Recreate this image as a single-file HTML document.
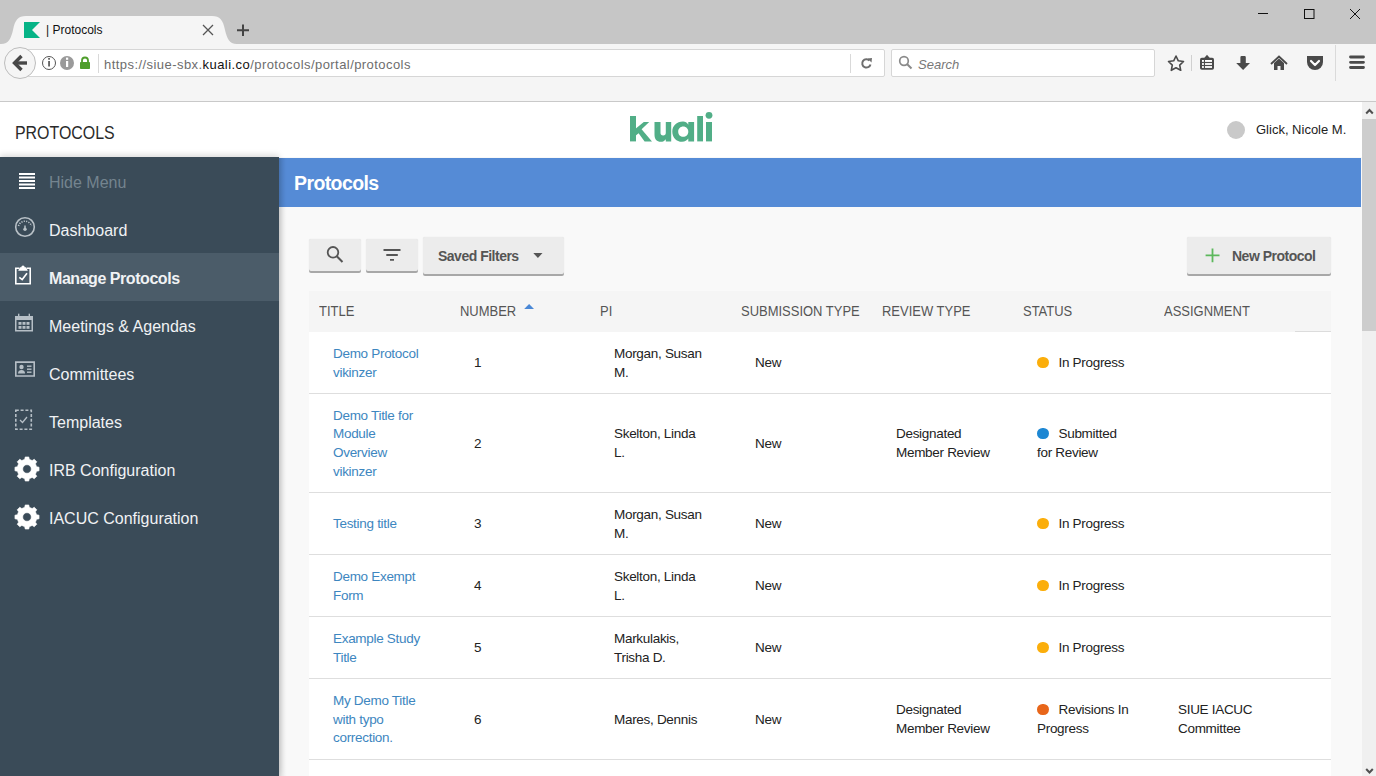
<!DOCTYPE html>
<html><head><meta charset="utf-8">
<style>
*{margin:0;padding:0;box-sizing:border-box}
html,body{width:1376px;height:776px;overflow:hidden;background:#fff;font-family:"Liberation Sans",sans-serif}
.abs{position:absolute}
#titlebar{left:0;top:0;width:1376px;height:44px;background:#c6c6c6}
#toolbar{left:0;top:44px;width:1376px;height:57px;background:#f5f5f5}
#tbline{left:0;top:101px;width:1376px;height:1px;background:#c9c9c9}
#page{left:0;top:102px;width:1362px;height:674px;background:#fff;overflow:hidden}
#sb{left:1362px;top:102px;width:14px;height:674px;background:#f0f0f0}
.ico{fill:#4a4a4a}
.nav{position:absolute;left:0;width:279px;height:48px;color:#f0f2f4;font-size:16px;line-height:48px}
.nav span{position:absolute;left:49px;top:1.5px;white-space:nowrap}
.nav svg{position:absolute}
.th{position:absolute;top:189px;height:41px;line-height:41px;font-size:14.5px;color:#555;white-space:nowrap;transform:scaleX(0.895);transform-origin:0 0}
.row{position:absolute;left:309px;width:1022px;background:#fff;border-bottom:1px solid #dedede}
.c{position:absolute;top:1px;bottom:-1px;display:flex;align-items:center;font-size:13.5px;line-height:18.6px;color:#222;white-space:nowrap;letter-spacing:-0.3px}
.c>span{display:block}
.bt{font-size:14px;font-weight:bold;color:#555;white-space:nowrap;letter-spacing:-0.5px;margin-top:-1px}
.t{color:#3d86c0}
.dot{display:inline-block;width:11.5px;height:11.5px;border-radius:50%;vertical-align:-1px;margin-right:10px}
.btn{position:absolute;background:#ececec;border-radius:2px;box-shadow:0 2px 0 #a8a8a8, 0 0 1px rgba(0,0,0,.15)}
</style></head><body>
<!-- browser chrome -->
<div id="titlebar" class="abs"></div>
<svg class="abs" style="left:0;top:0" width="1376" height="44">
  <path d="M1 44 C9 44 11 38 13 30 C15 20 18 16 26 16 L212 16 C220 16 223 20 225 30 C227 38 229 44 237 44 Z" fill="#f5f5f5"/>
  <!-- favicon -->
  <path d="M24 22 L40 22 L32 30 L40 38 L24 38 Z" fill="#06b386"/>
  <!-- close x -->
  <path d="M203 25 L213 35 M213 25 L203 35" stroke="#555" stroke-width="1.3"/>
  <!-- plus -->
  <path d="M243 24.5 V36 M237 30.25 H249" stroke="#444" stroke-width="2"/>
  <!-- window controls -->
  <path d="M1258 13.5 H1268" stroke="#111" stroke-width="1"/>
  <rect x="1304.5" y="9.5" width="9.5" height="9" fill="none" stroke="#111" stroke-width="1"/>
  <path d="M1350 9 L1360 19 M1360 9 L1350 19" stroke="#111" stroke-width="1"/>
</svg>
<div class="abs" style="left:46px;top:23px;font-size:12px;color:#111;white-space:nowrap">| Protocols</div>
<div id="toolbar" class="abs"></div>
<div id="tbline" class="abs"></div>
<!-- url bar -->
<div class="abs" style="left:20px;top:49px;width:865px;height:28px;background:#fff;border:1px solid #d6d6d6;border-radius:2px"></div>
<div class="abs" style="left:891px;top:49px;width:264px;height:28px;background:#fff;border:1px solid #d6d6d6;border-radius:2px"></div>
<svg class="abs" style="left:0;top:43px" width="1376" height="58">
  <circle cx="20" cy="20" r="15.5" fill="#f5f5f5" stroke="#bdbdbd" stroke-width="1"/>
  <path d="M27 20 H16" stroke="#484848" stroke-width="3.4"/>
  <path d="M21.5 13 L14.5 20 L21.5 27" fill="none" stroke="#484848" stroke-width="3.4" stroke-linejoin="miter"/>
  <circle cx="49" cy="20" r="6.5" fill="none" stroke="#555" stroke-width="1"/>
  <rect x="48.2" y="18" width="1.7" height="5.5" fill="#555"/><rect x="48.2" y="15" width="1.7" height="1.7" fill="#555"/>
  <circle cx="67" cy="20" r="7" fill="#9a9a9a"/>
  <rect x="66" y="18" width="2.2" height="6" fill="#fff"/><rect x="66" y="14.6" width="2.2" height="2.2" fill="#fff"/>
  <path d="M82 19 V17.5 A3 3 0 0 1 88 17.5 V19" fill="none" stroke="#4e9e2b" stroke-width="1.8"/>
  <rect x="80" y="19" width="10" height="7" rx="0.8" fill="#4e9e2b"/>
  <rect x="98" y="11" width="1" height="19" fill="#d9d9d9"/>
  <rect x="850" y="11" width="1" height="19" fill="#d9d9d9"/>
  <path d="M870.5 21.5 A4.2 4.2 0 1 1 869.5 17.5" fill="none" stroke="#6e6e6e" stroke-width="2"/>
  <path d="M867.5 15.5 L872 15 L871.5 19.5 Z" fill="#6e6e6e"/>
  <circle cx="904" cy="18" r="4.3" fill="none" stroke="#8a8a8a" stroke-width="1.7"/>
  <path d="M907 21 L911.5 25.5" stroke="#8a8a8a" stroke-width="2"/>
  <!-- star -->
  <path d="M1176 13 L1178.3 17.8 L1183.5 18.5 L1179.7 22.1 L1180.7 27.3 L1176 24.8 L1171.3 27.3 L1172.3 22.1 L1168.5 18.5 L1173.7 17.8 Z" fill="none" stroke="#4a4a4a" stroke-width="1.6" stroke-linejoin="round"/>
  <rect x="1191" y="12" width="1" height="16" fill="#d0d0d0"/>
  <!-- reading list -->
  <rect x="1200" y="14.8" width="14" height="12" rx="1.8" fill="#4a4a4a"/>
  <path d="M1203.8 15.5 L1207 11.8 L1210.2 15.5 Z" fill="#4a4a4a"/>
  <g fill="#fff"><rect x="1202" y="17" width="1.9" height="1.9"/><rect x="1202" y="20.1" width="1.9" height="1.8"/><rect x="1202" y="23.1" width="1.9" height="1.8"/>
  <rect x="1205" y="17" width="7" height="1.9"/><rect x="1205" y="20.1" width="7" height="1.8"/><rect x="1205" y="23.1" width="7" height="1.8"/></g>
  <!-- download -->
  <path d="M1240.4 14.2 Q1240.4 13.1 1241.5 13.1 H1244.7 Q1245.8 13.1 1245.8 14.2 V20.1 H1250 L1243.1 26.9 L1236.2 20.1 H1240.4 Z" fill="#4a4a4a"/>
  <!-- home -->
  <path d="M1271 21 L1279 13.5 L1287 21" fill="none" stroke="#4a4a4a" stroke-width="1.8"/>
  <path d="M1274 20 L1279 15.5 L1284 20 V27 H1280.5 V23 H1277.5 V27 H1274 Z" fill="#4a4a4a"/>
  <!-- pocket -->
  <path d="M1307 13 H1323 V19 A8 8 0 0 1 1307 19 Z" fill="#4a4a4a"/>
  <path d="M1311 18 L1315 22 L1319 18" fill="none" stroke="#fff" stroke-width="2.2" stroke-linecap="round" stroke-linejoin="round"/>
  <rect x="1335" y="2" width="1" height="36" fill="#dadada"/>
  <!-- hamburger -->
  <path d="M1350.5 14 H1363.5 M1350.5 19.3 H1363.5 M1350.5 24.5 H1363.5" stroke="#4a4a4a" stroke-width="2.8" stroke-linecap="round"/>
</svg>
<div class="abs" style="left:104px;top:57px;font-size:13px;color:#6d6d6d;white-space:nowrap;letter-spacing:0.44px">https:/<span>/</span>siue-sbx.<span style="color:#111">kuali.co</span>/protocols/portal/protocols</div>
<div class="abs" style="left:918px;top:57px;font-size:13px;color:#777;font-style:italic;white-space:nowrap">Search</div>

<!-- page -->
<div id="page" class="abs">
  <!-- header -->
  <div class="abs" style="left:0;top:0;width:1362px;height:55px;background:#fff"></div>
  <div class="abs" id="ptitle" style="left:15px;top:21px;font-size:17.5px;color:#2a2a2a;white-space:nowrap;transform:scaleX(0.91);transform-origin:0 0">PROTOCOLS</div>
  <svg class="abs" style="left:610px;top:5px" width="110" height="45" viewBox="610 107 110 45">
    <g fill="#51ae87">
      <rect x="630" y="116" width="6" height="25.4"/>
      <path d="M635.5 128.8 L643.8 122 L649.2 122 L641.6 129.2 L652 141.4 L644.6 141.4 L638.6 133.2 L635.5 135.8 Z"/>
      <path d="M654.5 122 H660.5 V132.8 A2.65 2.65 0 0 0 665.8 132.8 V122 H671.2 V141.4 H665.8 V139.2 C664.6 140.9 663 141.8 660.8 141.8 C656.8 141.8 654.5 139.2 654.5 134.8 Z"/>
      <path d="M683 121.6 C676.5 121.6 672.3 126 672.3 131.7 C672.3 137.5 676.5 141.8 682 141.8 C685 141.8 687 140.6 688.3 138.6 V141.4 H694.1 V122 H688.3 V124.8 C687 122.8 685.3 121.6 683 121.6 Z M683.2 126.6 C686 126.6 688.3 128.8 688.3 131.7 C688.3 134.6 686 136.8 683.2 136.8 C680.4 136.8 678.2 134.6 678.2 131.7 C678.2 128.8 680.4 126.6 683.2 126.6 Z"/>
      <rect x="697.2" y="116" width="5.8" height="25.4"/>
      <rect x="706" y="122" width="6" height="19.4"/>
      <circle cx="709" cy="115.3" r="3.4"/>
    </g>
  </svg>
  <div class="abs" style="left:1227px;top:19px;width:18px;height:18px;border-radius:50%;background:#c9c9c9"></div>
  <div class="abs" id="uname" style="left:1256px;top:20px;font-size:13px;color:#222;white-space:nowrap">Glick, Nicole M.</div>

  <!-- content area -->
  <div class="abs" style="left:279px;top:55px;width:1083px;height:619px;background:#f9f9f9"></div>
  <div class="abs" style="left:279px;top:56px;width:1082px;height:49px;background:#558bd6"></div>
  <div class="abs" style="left:279px;top:56px;width:12px;height:619px;background:linear-gradient(to right,rgba(0,0,0,.13),rgba(0,0,0,.07) 3px,rgba(0,0,0,.02) 6px,rgba(0,0,0,0) 8px)"></div>
  <div class="abs" id="htitle" style="left:294px;top:69.5px;font-size:19.5px;font-weight:bold;color:#fff;white-space:nowrap;letter-spacing:-0.6px">Protocols</div>

  <!-- toolbar buttons -->
  <div class="btn" style="left:309px;top:137px;width:52px;height:32px"></div>
  <div class="btn" style="left:366px;top:137px;width:52px;height:32px"></div>
  <div class="btn" style="left:423px;top:135px;width:141px;height:37px"></div>
  <div class="btn" style="left:1187px;top:135px;width:144px;height:37px"></div>
  <svg class="abs" style="left:279px;top:125px" width="1083" height="60" viewBox="279 227 1083 60">
    <circle cx="333" cy="252.3" r="5.3" fill="none" stroke="#555" stroke-width="1.8"/>
    <path d="M336.8 256.3 L342.5 262" stroke="#555" stroke-width="2"/>
    <path d="M383.5 250 H400.5 M386.3 255 H397.8 M390 259.8 H394" stroke="#555" stroke-width="1.8"/>
    <path d="M533.3 253 H542.5 L537.9 258 Z" fill="#555"/>
    <path d="M1212.5 248.4 V262.3 M1205.6 255.3 H1219.5" stroke="#5cb85c" stroke-width="1.8"/>
  </svg>
  <div class="abs bt" style="left:438px;top:147px">Saved Filters</div>
  <div class="abs bt" style="left:1232px;top:147px">New Protocol</div>
  <div class="abs" style="left:309px;top:189px;width:1022px;height:41px;background:#f5f5f5"></div>
  <div class="abs" style="left:1295px;top:229px;width:36px;height:1px;background:#dcdcdc"></div>
  <div class="th" style="left:319px">TITLE</div>
  <div class="th" style="left:460px">NUMBER</div>
  <div class="th" style="left:600px">PI</div>
  <div class="th" style="left:741px">SUBMISSION TYPE</div>
  <div class="th" style="left:882px">REVIEW TYPE</div>
  <div class="th" style="left:1023px">STATUS</div>
  <div class="th" style="left:1164px">ASSIGNMENT</div>
  <svg class="abs" style="left:523px;top:201px" width="12" height="7"><path d="M1.2 6.1 L6.1 1.1 L11 6.1 Z" fill="#4a88d6"/></svg>
  <div class="row" style="top:230px;height:62px">
    <div class="c t" style="left:24px"><span>Demo Protocol<br>vikinzer</span></div>
    <div class="c" style="left:165px"><span>1</span></div>
    <div class="c" style="left:305px"><span>Morgan, Susan<br>M.</span></div>
    <div class="c" style="left:446px"><span>New</span></div>
    <div class="c" style="left:587px"><span></span></div>
    <div class="c" style="left:728px"><span><i class="dot" style="background:#fbae0b"></i>In Progress</span></div>
    <div class="c" style="left:869px"><span></span></div>
  </div>
  <div class="row" style="top:292px;height:99px">
    <div class="c t" style="left:24px"><span>Demo Title for<br>Module<br>Overview<br>vikinzer</span></div>
    <div class="c" style="left:165px"><span>2</span></div>
    <div class="c" style="left:305px"><span>Skelton, Linda<br>L.</span></div>
    <div class="c" style="left:446px"><span>New</span></div>
    <div class="c" style="left:587px"><span>Designated<br>Member Review</span></div>
    <div class="c" style="left:728px"><span><i class="dot" style="background:#1d87d3"></i>Submitted<br>for Review</span></div>
    <div class="c" style="left:869px"><span></span></div>
  </div>
  <div class="row" style="top:391px;height:62px">
    <div class="c t" style="left:24px"><span>Testing title</span></div>
    <div class="c" style="left:165px"><span>3</span></div>
    <div class="c" style="left:305px"><span>Morgan, Susan<br>M.</span></div>
    <div class="c" style="left:446px"><span>New</span></div>
    <div class="c" style="left:587px"><span></span></div>
    <div class="c" style="left:728px"><span><i class="dot" style="background:#fbae0b"></i>In Progress</span></div>
    <div class="c" style="left:869px"><span></span></div>
  </div>
  <div class="row" style="top:453px;height:62px">
    <div class="c t" style="left:24px"><span>Demo Exempt<br>Form</span></div>
    <div class="c" style="left:165px"><span>4</span></div>
    <div class="c" style="left:305px"><span>Skelton, Linda<br>L.</span></div>
    <div class="c" style="left:446px"><span>New</span></div>
    <div class="c" style="left:587px"><span></span></div>
    <div class="c" style="left:728px"><span><i class="dot" style="background:#fbae0b"></i>In Progress</span></div>
    <div class="c" style="left:869px"><span></span></div>
  </div>
  <div class="row" style="top:515px;height:62px">
    <div class="c t" style="left:24px"><span>Example Study<br>Title</span></div>
    <div class="c" style="left:165px"><span>5</span></div>
    <div class="c" style="left:305px"><span>Markulakis,<br>Trisha D.</span></div>
    <div class="c" style="left:446px"><span>New</span></div>
    <div class="c" style="left:587px"><span></span></div>
    <div class="c" style="left:728px"><span><i class="dot" style="background:#fbae0b"></i>In Progress</span></div>
    <div class="c" style="left:869px"><span></span></div>
  </div>
  <div class="row" style="top:577px;height:81px">
    <div class="c t" style="left:24px"><span>My Demo Title<br>with typo<br>correction.</span></div>
    <div class="c" style="left:165px"><span>6</span></div>
    <div class="c" style="left:305px"><span>Mares, Dennis</span></div>
    <div class="c" style="left:446px"><span>New</span></div>
    <div class="c" style="left:587px"><span>Designated<br>Member Review</span></div>
    <div class="c" style="left:728px"><span><i class="dot" style="background:#e8661a"></i>Revisions In<br>Progress</span></div>
    <div class="c" style="left:869px"><span>SIUE IACUC<br>Committee</span></div>
  </div>
  <div class="row" style="top:658px;height:71px">
    <div class="c t" style="left:24px"><span></span></div>
    <div class="c" style="left:165px"><span></span></div>
    <div class="c" style="left:305px"><span></span></div>
    <div class="c" style="left:446px"><span></span></div>
    <div class="c" style="left:587px"><span></span></div>
    <div class="c" style="left:728px"><span></span></div>
    <div class="c" style="left:869px"><span></span></div>
  </div>
  <!-- sidebar -->
  <div class="abs" style="left:0;top:55px;width:279px;height:619px;background:#3a4b58;box-shadow:0 -2px 6px rgba(0,0,0,.15)"></div>
  <div class="abs" style="left:0;top:151px;width:279px;height:48px;background:#4b5c69"></div>
  <svg class="abs" style="left:0;top:55px" width="279" height="480">
    <!-- hide menu -->
    <g fill="#fff"><rect x="19" y="16" width="16" height="2"/><rect x="19" y="19.5" width="16" height="2"/><rect x="19" y="23" width="16" height="2"/><rect x="19" y="26.5" width="16" height="2"/><rect x="19" y="30" width="16" height="2"/></g>
    <!-- dashboard gauge -->
    <g stroke="#b9c1c7" fill="none">
      <circle cx="25" cy="70" r="9.3" stroke-width="1.6"/>
      <path d="M18.5 69 A6.8 6.8 0 0 1 31.5 69" stroke-width="1.6" stroke-dasharray="1.2 1.2"/>
      <path d="M25 68.5 V72" stroke-width="1.5"/>
    </g>
    <circle cx="25" cy="72.3" r="1.7" fill="#b9c1c7"/>
    <!-- clipboard -->
    <g fill="none" stroke="#fff" stroke-width="1.6">
      <path d="M19 111.2 H15.8 V126.8 H30.2 V111.2 H27"/>
      <path d="M19.3 120.3 L22.2 122.6 L27 116.2"/>
    </g>
    <path d="M18.2 113.8 L19.8 110.2 H21.3 A1.7 1.7 0 0 1 24.7 110.2 H26.2 L27.8 113.8 Z" fill="#fff"/>
    <!-- calendar -->
    <g fill="#b6bfc6">
      <path d="M15 159 H33 V174.5 H15 Z M16.5 163 V173 H31.5 V163 Z" fill-rule="evenodd"/>
      <rect x="18" y="156.7" width="1.4" height="3"/><rect x="28.6" y="156.7" width="1.4" height="3"/>
      <rect x="18.5" y="165" width="3" height="2.8"/><rect x="22.5" y="165" width="3" height="2.8"/><rect x="26.5" y="165" width="3" height="2.8"/>
      <rect x="18.5" y="169" width="3" height="2.8"/><rect x="22.5" y="169" width="3" height="2.8"/><rect x="26.5" y="169" width="3" height="2.8"/>
    </g>
    <!-- id card -->
    <g fill="#b6bfc6">
      <path d="M15 204.3 H35 V219.8 H15 Z M16.6 205.9 V218.2 H33.4 V205.9 Z" fill-rule="evenodd"/>
      <circle cx="21.5" cy="210" r="2.2"/>
      <path d="M18 216.5 Q18 213 21.5 213 Q25 213 25 216.5 Z"/>
      <rect x="27" y="208.5" width="4.5" height="1.4"/><rect x="27" y="211.5" width="4.5" height="1.4"/><rect x="27" y="214.5" width="4.5" height="1.4"/>
    </g>
    <!-- templates -->
    <rect x="15.8" y="253.3" width="15.5" height="19" fill="none" stroke="#b6bfc6" stroke-width="1.6" stroke-dasharray="3 1.8"/>
    <path d="M20 263 L22.5 265.5 L27 260" fill="none" stroke="#b6bfc6" stroke-width="1.3"/>
    <!-- gears -->
    <path fill="#fff" fill-rule="evenodd" stroke="#fff" stroke-width="0.6" stroke-linejoin="round" d="M24.69 302.37 L25.19 299.94 L28.81 299.94 L29.31 302.37 L32.17 303.56 L34.25 302.19 L36.81 304.75 L35.44 306.83 L36.63 309.69 L39.06 310.19 L39.06 313.81 L36.63 314.31 L35.44 317.17 L36.81 319.25 L34.25 321.81 L32.17 320.44 L29.31 321.63 L28.81 324.06 L25.19 324.06 L24.69 321.63 L21.83 320.44 L19.75 321.81 L17.19 319.25 L18.56 317.17 L17.37 314.31 L14.94 313.81 L14.94 310.19 L17.37 309.69 L18.56 306.83 L17.19 304.75 L19.75 302.19 L21.83 303.56 Z M31.30 312.00 A4.3 4.3 0 1 0 22.70 312.00 A4.3 4.3 0 1 0 31.30 312.00 Z"/>
    <path fill="#fff" fill-rule="evenodd" stroke="#fff" stroke-width="0.6" stroke-linejoin="round" d="M24.69 350.37 L25.19 347.94 L28.81 347.94 L29.31 350.37 L32.17 351.56 L34.25 350.19 L36.81 352.75 L35.44 354.83 L36.63 357.69 L39.06 358.19 L39.06 361.81 L36.63 362.31 L35.44 365.17 L36.81 367.25 L34.25 369.81 L32.17 368.44 L29.31 369.63 L28.81 372.06 L25.19 372.06 L24.69 369.63 L21.83 368.44 L19.75 369.81 L17.19 367.25 L18.56 365.17 L17.37 362.31 L14.94 361.81 L14.94 358.19 L17.37 357.69 L18.56 354.83 L17.19 352.75 L19.75 350.19 L21.83 351.56 Z M31.30 360.00 A4.3 4.3 0 1 0 22.70 360.00 A4.3 4.3 0 1 0 31.30 360.00 Z"/>
  </svg>
  <div class="nav" style="top:55px;color:#74848f"><span>Hide Menu</span></div>
  <div class="nav" style="top:103px"><span>Dashboard</span></div>
  <div class="nav" style="top:151px;font-weight:bold;letter-spacing:-0.45px"><span>Manage Protocols</span></div>
  <div class="nav" style="top:199px"><span>Meetings &amp; Agendas</span></div>
  <div class="nav" style="top:247px"><span>Committees</span></div>
  <div class="nav" style="top:295px"><span>Templates</span></div>
  <div class="nav" style="top:343px"><span>IRB Configuration</span></div>
  <div class="nav" style="top:391px"><span>IACUC Configuration</span></div>
</div>
<div id="sb" class="abs"></div>
<div class="abs" style="left:1362px;top:119px;width:14px;height:212px;background:#cdcdcd"></div>
<svg class="abs" style="left:1362px;top:102px" width="14" height="674">
  <path d="M4.2 11.5 L7.5 8 L10.8 11.5" fill="none" stroke="#505050" stroke-width="2"/>
  <path d="M4.2 667 L7.5 670.5 L10.8 667" fill="none" stroke="#505050" stroke-width="2"/>
</svg>
</body></html>
